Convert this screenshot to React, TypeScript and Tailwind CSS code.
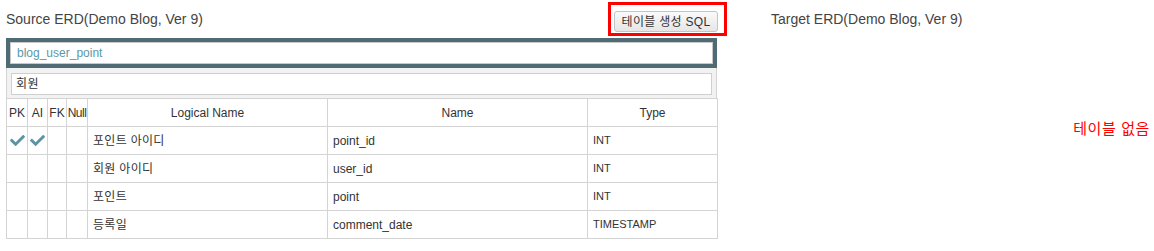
import React from 'react';

const columns = [
  { id: 'pk', label: 'PK', width: 'w-[21px]' },
  { id: 'ai', label: 'AI', width: 'w-[20px]' },
  { id: 'fk', label: 'FK', width: 'w-[19px]' },
  { id: 'null', label: 'Null', width: 'w-[21px]' },
  { id: 'logical', label: 'Logical Name', width: 'w-[240px]' },
  { id: 'name', label: 'Name', width: 'w-[260px]' },
  { id: 'type', label: 'Type', width: 'w-[130px]' }
];

const fields = [
  { id: '1', pk: true, ai: true, logical: '포인트 아이디', name: 'point_id', type: 'INT' },
  { id: '2', pk: false, ai: false, logical: '회원 아이디', name: 'user_id', type: 'INT' },
  { id: '3', pk: false, ai: false, logical: '포인트', name: 'point', type: 'INT' },
  { id: '4', pk: false, ai: false, logical: '등록일', name: 'comment_date', type: 'TIMESTAMP' }
];

const CheckMark = () => (
  <svg viewBox="0 0 512 512" className="w-[17px] h-[15px] mx-auto" fill="#5b93a3">
    <path d="M173.898 439.404l-166.4-166.4c-9.997-9.997-9.997-26.206 0-36.204l36.203-36.204c9.997-9.998 26.207-9.998 36.204 0L192 312.69 432.095 72.596c9.997-9.997 26.207-9.997 36.204 0l36.203 36.204c9.997 9.997 9.997 26.206 0 36.204l-294.4 294.401c-9.998 9.997-26.207 9.997-36.204-.001z" />
  </svg>
);

const App = () => {
  return (
    <div className="flex w-[1154px] h-[251px] bg-white text-[#333] font-['Liberation_Sans','Noto_Sans_CJK_KR',sans-serif]">
      <div className="w-[765px] pl-[6px]">
        <div className="flex items-center justify-between w-[711px] h-[38px]">
          <span className="text-[14px] leading-[16px] text-[#444]">Source ERD(Demo Blog, Ver 9)</span>
          <div className="relative mr-[-1px] mt-[3px]">
            <button className="h-[21px] w-[104px] px-[6px] text-[12px] leading-[14px] tracking-[0.3px] text-[#333] bg-gradient-to-b from-[#fafafa] to-[#e6e6e6] border border-[#c4c4c4] rounded-[3px]">
              테이블 생성 SQL
            </button>
            <div className="absolute left-[-6px] top-[-7px] w-[119px] h-[34px] border-[3px] border-[#ff0000]" />
          </div>
        </div>

        <div className="w-[711px]">
          <div className="bg-[#4f6b73] p-[4px]">
            <div className="h-[22px] bg-white border border-[#c8c8c8] px-[6px] flex items-center text-[12px] text-[#5b98a6]">
              blog_user_point
            </div>
          </div>
          <div className="bg-[#f2f2f2] border-x border-[#d4d4d4] pt-[5px] pb-[3px] px-[4px]">
            <div className="h-[22px] bg-white border border-[#cfcfcf] px-[4px] flex items-center text-[12px] text-[#333] tracking-[0.5px]">
              회원
            </div>
          </div>
          <table className="w-[711px] border-collapse table-fixed text-[12px]">
            <thead>
              <tr className="h-[28px]">
                {columns.map(col => (
                  <th
                    key={col.id}
                    className={`${col.width} border border-[#d4d4d4] font-normal text-center p-0 ${col.id === 'null' ? 'tracking-[-0.5px]' : ''}`}
                  >
                    {col.label}
                  </th>
                ))}
              </tr>
            </thead>
            <tbody>
              {fields.map(field => (
                <tr key={field.id} className="h-[28px]">
                  <td className="border border-[#d4d4d4] p-0">{field.pk && <CheckMark />}</td>
                  <td className="border border-[#d4d4d4] p-0">{field.ai && <CheckMark />}</td>
                  <td className="border border-[#d4d4d4] p-0" />
                  <td className="border border-[#d4d4d4] p-0" />
                  <td className="border border-[#d4d4d4] px-[5px] tracking-[0.3px]">{field.logical}</td>
                  <td className="border border-[#d4d4d4] px-[5px]">{field.name}</td>
                  <td className="border border-[#d4d4d4] px-[5px] text-[11px]">{field.type}</td>
                </tr>
              ))}
            </tbody>
          </table>
        </div>
      </div>

      <div className="flex-1 pl-[6px] pr-[4px]">
        <div className="flex items-center h-[38px]">
          <span className="text-[14px] leading-[16px] text-[#444]">Target ERD(Demo Blog, Ver 9)</span>
        </div>
        <div className="flex justify-end pt-[83px]">
          <span className="text-[15px] leading-[16px] tracking-[0.6px] text-[#ff0000]">테이블 없음</span>
        </div>
      </div>
    </div>
  );
};

export default App;
